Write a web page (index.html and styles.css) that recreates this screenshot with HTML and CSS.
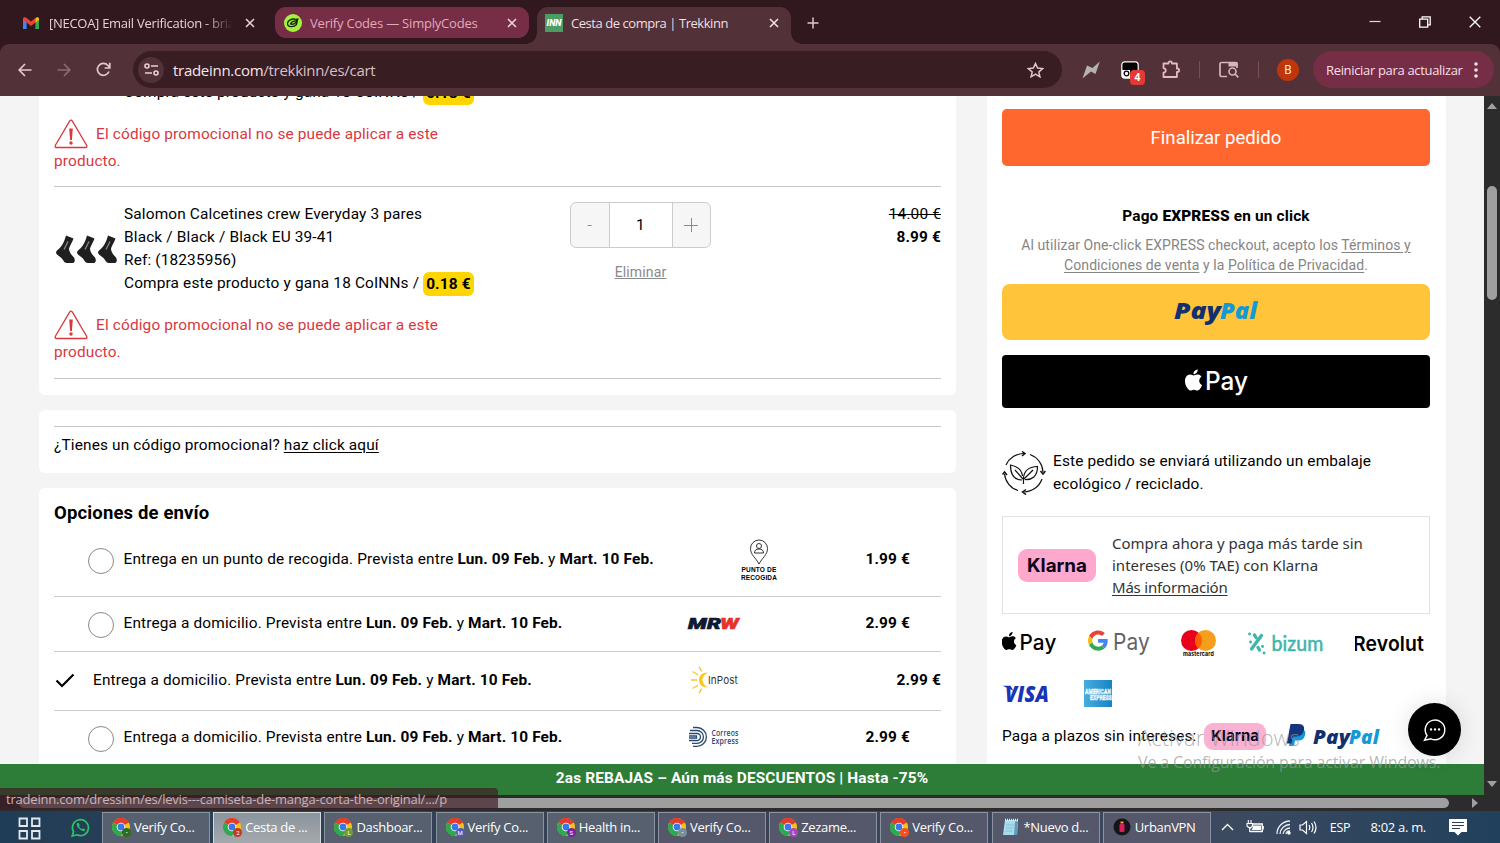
FILE: index.html
```html
<!DOCTYPE html>
<html lang="es">
<head>
    <meta charset="UTF-8">
    <meta name="viewport" content="width=device-width, initial-scale=1.0">
    <title>Cesta de compra | Trekkinn</title>
    <link rel="stylesheet" href="styles.css">
</head>
<body>
    <!-- shared icons -->
    <svg class="defs" width="0" height="0">
        <symbol id="close" viewBox="0 0 10 10"><path d="M1 1l8 8M9 1l-8 8" stroke="currentColor" stroke-width="1.6" fill="none"/></symbol>
        <symbol id="apple" viewBox="0 0 24 24"><path fill="currentColor" d="M12.152 6.896c-.948 0-2.415-1.078-3.96-1.04-2.04.027-3.91 1.183-4.961 3.014-2.117 3.675-.546 9.103 1.519 12.09 1.013 1.454 2.208 3.09 3.792 3.039 1.52-.065 2.09-.987 3.935-.987 1.831 0 2.35.987 3.96.948 1.637-.026 2.676-1.48 3.676-2.948 1.156-1.688 1.636-3.325 1.662-3.415-.039-.013-3.182-1.221-3.22-4.857-.026-3.04 2.48-4.494 2.597-4.559-1.429-2.09-3.623-2.324-4.39-2.376-2-.156-3.675 1.09-4.61 1.09zM15.53 3.83c.843-1.012 1.4-2.427 1.245-3.83-1.207.052-2.662.805-3.532 1.818-.78.896-1.454 2.338-1.273 3.714 1.338.104 2.715-.688 3.559-1.701"/></symbol>
        <symbol id="warning" viewBox="0 0 34 30">
            <path d="M15.6 2.2Q17 .2 18.4 2.2L32.6 26.2Q33.5 28.5 31.5 28.5H2.5Q.5 28.5 1.4 26.2Z" fill="none" stroke="#d9383e" stroke-width="1.3"/>
            <path d="M15.200 9.500h3.600l-.9 11.500h-1.800z" fill="#d9383e"/><circle cx="17" cy="24" r="1.7" fill="#d9383e"/>
        </symbol>
        <symbol id="chrome" viewBox="0 0 18 18">
            <circle cx="9" cy="9" r="9" fill="#fbc116"/>
            <path d="M9 9L1.200 4.500A9 9 0 0 1 16.800 4.500Z" fill="#e33b2e"/>
            <path d="M9 9L1.200 4.500A9 9 0 0 0 9 18L12.900 11.200Z" fill="#2da94f"/>
            <circle cx="9" cy="9" r="4.300" fill="#fff"/><circle cx="9" cy="9" r="3.400" fill="#3b78e7"/>
        </symbol>
        <symbol id="sock" viewBox="0 0 20 29"><path d="M11 .5l7.500 3c-1 3-3.500 7-4.500 10 0 3 2 6 5 9 1.500 2.500.8 5-1 5.500h-6c-2 0-3-1-4-3-1.500-2.500-4-4-6-5.500-1.500-1.500-1.200-3 .5-4.500C7 11.500 9 7.500 11 .5z" fill="#1f1f1f"/><path d="M13 6.500l-4 8" stroke="#8b8b8b" stroke-width="1.200"/></symbol>
    </svg>

    <header class="tabs">
        <div class="tab">
            <svg class="gmail" width="16" height="12" viewBox="0 0 16 12"><path d="M0 1.500V12h3.600V5z" fill="#4285f4"/><path d="M16 1.500V12h-3.600V5z" fill="#34a853"/><path d="M0 1.500C0 .3 1.800-.5 3.600 1L8 4.500 12.400 1v4.500L8 9 3.600 5.500 0 3z" fill="#ea4335"/><path d="M12.400 1C14.200-.5 16 .3 16 1.500V3l-3.600 2.700z" fill="#fbbc04"/></svg>
            <span class="tab-title faded">[NECOA] Email Verification - brian</span>
            <svg class="tab-close" width="10" height="10"><use href="#close"/></svg>
        </div>
        <div class="tab grouped">
            <svg width="18" height="18" viewBox="0 0 18 18"><circle cx="9" cy="9" r="9" fill="#a6f03f"/><path d="M12 5.500C8 4 3.500 6.500 3.500 9.500c0 4 6.500 4 9 1l1-4.500M6.500 10c.5-2 3.500-3.500 6-3-.5 2-3 4-6 3zM12 5.500l2.500-.5" fill="none" stroke="#14260c" stroke-width="1.300"/></svg>
            <span class="tab-title simply">Verify Codes — SimplyCodes</span>
            <svg class="tab-close" width="10" height="10"><use href="#close"/></svg>
        </div>
        <div class="tab active">
            <svg width="18" height="18" viewBox="0 0 18 18"><rect width="18" height="18" fill="#4c9d63"/><text x="1.500" y="12" font-family="Roboto" font-weight="900" font-style="italic" font-size="8.500" fill="#fff" textLength="15" lengthAdjust="spacingAndGlyphs">INN</text></svg>
            <span class="tab-title">Cesta de compra | Trekkinn</span>
            <svg class="tab-close" width="10" height="10"><use href="#close"/></svg>
        </div>
        <svg class="new-tab" width="12" height="12" viewBox="0 0 12 12"><path d="M6 .5v11M.5 6h11" stroke="#e6c3cc" stroke-width="1.500"/></svg>
        <div class="window-buttons">
            <svg width="12" height="12" viewBox="0 0 12 12"><path d="M.5 5.500h11" stroke="#e8d5da" stroke-width="1.200"/></svg>
            <svg width="12" height="12" viewBox="0 0 12 12"><path d="M.7 3.200h8v8h-8zM3.200 3V.8h8v8H9" fill="none" stroke="#fff" stroke-width="1.300"/></svg>
            <svg width="12" height="12" viewBox="0 0 12 12"><path d="M.7.7l10.600 10.600M11.300.7L.7 11.300" stroke="#fff" stroke-width="1.300"/></svg>
        </div>
    </header>

    <nav class="toolbar">
        <svg width="14" height="14" viewBox="0 0 14 14"><path d="M13.500 7H1.500M7 1L1.200 7 7 13" fill="none" stroke="#e3c7ce" stroke-width="1.700"/></svg>
        <svg class="nav-gap" width="14" height="14" viewBox="0 0 14 14"><path d="M.5 7h12M7 1l5.800 6L7 13" fill="none" stroke="#8d6b74" stroke-width="1.700"/></svg>
        <svg class="nav-gap" width="15" height="15" viewBox="0 0 15 15"><path d="M13 9.500A6 6 0 1 1 12 3.500L13.200 5M13.800.8V6H8.600" fill="none" stroke="#e3c7ce" stroke-width="1.700"/></svg>
        <div class="omnibox">
            <span class="site-info"><svg width="15" height="13" viewBox="0 0 15 13"><path d="M7 3h7M1 10h7" stroke="#e9cfd6" stroke-width="1.700"/><circle cx="3" cy="3" r="2" fill="none" stroke="#e9cfd6" stroke-width="1.600"/><circle cx="12" cy="10" r="2" fill="none" stroke="#e9cfd6" stroke-width="1.600"/></svg></span>
            <span class="url">tradeinn.com<i>/trekkinn/es/cart</i></span>
            <svg width="17" height="16" viewBox="0 0 17 16"><path d="M8.500 1.500l2.100 4.600 5 .5-3.800 3.300 1.100 4.900-4.400-2.600-4.400 2.600 1.100-4.900L1.400 6.600l5-.5z" fill="none" stroke="#e3c7ce" stroke-width="1.500"/></svg>
        </div>
        <div class="extensions">
            <svg width="18" height="18" viewBox="0 0 18 18"><path d="M.5 17.500L5 4.500l5.500 2.500L17.800.5 13.500 13 9 10.500z" fill="#b7b2b2"/></svg>
            <div class="ext-box">
                <svg width="18" height="18" viewBox="0 0 18 18"><rect x=".8" y=".8" width="16.400" height="16.400" rx="3" fill="#000" stroke="#fff" stroke-width="1.200"/><path d="M1 9h8v8H3q-2 0-2-2z" fill="#fff"/><circle cx="5.500" cy="12.500" r="2.300" fill="none" stroke="#000" stroke-width="1.300"/></svg>
                <b>4</b>
            </div>
            <svg class="puzzle" width="18" height="19" viewBox="0 0 18 19"><path d="M1.500 3.500h5V3a1.700 1.700 0 0 1 3.400 0v.5h5v5h.5a1.700 1.700 0 0 1 0 3.400h-.5V17H1.500v-4.300c3-.5 3-4 0-4.500z" fill="none" stroke="#e3b9c6" stroke-width="1.800" stroke-linejoin="round"/></svg>
            <span class="divider first"></span>
            <svg class="lens" width="20" height="17" viewBox="0 0 20 17"><path d="M8 15.500H2.500q-1.500 0-1.500-1.500V3q0-1.500 1.500-1.500h14q1.500 0 1.500 1.500v4" fill="none" stroke="#d9b5c0" stroke-width="1.700"/><path d="M9.500 1h9v4.500h-9z" fill="#d9b5c0"/><circle cx="13.500" cy="10.500" r="3.500" fill="none" stroke="#d9b5c0" stroke-width="1.600"/><path d="M16 13l3.300 3.300" stroke="#d9b5c0" stroke-width="1.700"/></svg>
            <span class="divider"></span>
            <span class="avatar">B</span>
        </div>
        <div class="restart">Reiniciar para actualizar<svg width="4" height="16" viewBox="0 0 4 16"><circle cx="2" cy="2" r="1.800"/><circle cx="2" cy="8" r="1.800"/><circle cx="2" cy="14" r="1.800"/></svg></div>
    </nav>

    <div class="view">
        <main class="page">
            <section class="left">
                <div class="card cart">
                    <p class="coins first-coins">Compra este producto y gana 18 CoINNs / <b>0.18 €</b></p>
                    <div class="alert">
                        <div><svg width="34" height="30"><use href="#warning"/></svg>El código promocional no se puede aplicar a este</div>
                        <p>producto.</p>
                    </div>
                    <hr>
                    <div class="item">
                        <div class="thumb"><svg width="20" height="29"><use href="#sock"/></svg><svg width="20" height="29"><use href="#sock"/></svg><svg width="20" height="29"><use href="#sock"/></svg></div>
                        <div class="info">
                            <p class="name">Salomon Calcetines crew Everyday 3 pares</p>
                            <p>Black / Black / Black EU 39-41</p>
                            <p>Ref: (18235956)</p>
                            <p class="coins">Compra este producto y gana 18 CoINNs / <b>0.18 €</b></p>
                        </div>
                        <div class="qty-col">
                            <div class="qty"><span>-</span><strong>1</strong><span><svg width="14" height="14" viewBox="0 0 14 14"><path d="M7.500 0v14M0 7.500h14" stroke="#8a8a8a"/></svg></span></div>
                            <a class="remove">Eliminar</a>
                        </div>
                        <div class="price"><s>14.00 €</s><b>8.99 €</b></div>
                    </div>
                    <div class="alert second">
                        <div><svg width="34" height="30"><use href="#warning"/></svg>El código promocional no se puede aplicar a este</div>
                        <p>producto.</p>
                    </div>
                    <hr>
                </div>

                <div class="card promo">
                    <hr>
                    <p>¿Tienes un código promocional? <u>haz click aquí</u></p>
                </div>

                <div class="card shipping">
                    <h2>Opciones de envío</h2>
                    <div class="option pickup">
                        <span class="radio"></span>
                        <p>Entrega en un punto de recogida. Prevista entre <b>Lun. 09 Feb.</b> y <b>Mart. 10 Feb.</b></p>
                        <div class="carrier"><svg width="38" height="42" viewBox="0 0 38 42"><path d="M19 25C16 19 10.500 16 10.500 9.500a8.500 8.500 0 0 1 17 0C27.500 16 22 19 19 25z" fill="none" stroke="#333" stroke-width="1"/><circle cx="19" cy="7" r="2.500" fill="none" stroke="#333"/><path d="M14.500 14q0-4 4.500-4t4.500 4z" fill="none" stroke="#333"/><text x="1.500" y="33" font-family="Liberation Sans" font-weight="700" font-size="6.500" textLength="35" lengthAdjust="spacingAndGlyphs">PUNTO DE</text><text x="1" y="40.500" font-family="Liberation Sans" font-weight="700" font-size="6.500" textLength="36" lengthAdjust="spacingAndGlyphs">RECOGIDA</text></svg></div>
                        <strong>1.99 €</strong>
                    </div>
                    <div class="option mrw">
                        <span class="radio"></span>
                        <p>Entrega a domicilio. Prevista entre <b>Lun. 09 Feb.</b> y <b>Mart. 10 Feb.</b></p>
                        <div class="carrier"><svg width="55" height="14" viewBox="0 0 55 14"><text x="1" y="12.500" font-family="Roboto" font-weight="900" font-style="italic" font-size="15.500" fill="#0c1a33" stroke="#0c1a33" stroke-width=".7" textLength="33" lengthAdjust="spacingAndGlyphs">MR</text><text x="33" y="12.500" font-family="Roboto" font-weight="900" font-style="italic" font-size="15.500" fill="#e8302d" stroke="#e8302d" stroke-width=".5" textLength="19" lengthAdjust="spacingAndGlyphs">W</text></svg></div>
                        <strong>2.99 €</strong>
                    </div>
                    <div class="option selected">
                        <svg class="check" width="20" height="15" viewBox="0 0 20 15"><path d="M1.500 7.500l5.500 5.500L18.500 1.500" fill="none" stroke="#000" stroke-width="2.200"/></svg>
                        <p>Entrega a domicilio. Prevista entre <b>Lun. 09 Feb.</b> y <b>Mart. 10 Feb.</b></p>
                        <div class="carrier"><svg width="52" height="28" viewBox="0 0 52 28"><path d="M21 6.500q-9 0-9 7.500t9 7.500q-5.500-2.500-5.500-7.500T21 6.500z" fill="#fbc71b"/><path d="M12 .8l2.800 4.500M5.500 5.500l5.500 3.200M4 14h6M5.500 22.500l5.500-3.200M12 27.200l2.800-4.500" stroke="#fbc71b" stroke-width="1.300"/><text x="21" y="18" font-family="Inter, sans-serif" font-size="11" fill="#333" textLength="30" lengthAdjust="spacingAndGlyphs">InPost</text></svg></div>
                        <strong>2.99 €</strong>
                    </div>
                    <div class="option correos">
                        <span class="radio"></span>
                        <p>Entrega a domicilio. Prevista entre <b>Lun. 09 Feb.</b> y <b>Mart. 10 Feb.</b></p>
                        <div class="carrier"><svg width="54" height="22" viewBox="0 0 54 22"><g fill="none" stroke="#2b4a73" stroke-width="1.300"><path d="M6 1.500h4a9.300 9.300 0 0 1 0 18.800H6M3 4.500h7a6.400 6.400 0 0 1 0 12.900H5M2 7.500h8a3.500 3.500 0 0 1 0 7H2M2 10h7.500v2H2"/></g><text x="24.500" y="9.500" font-family="Open Sans" font-size="8" font-weight="600" fill="#2b4a73" textLength="27" lengthAdjust="spacingAndGlyphs">Correos</text><text x="24.500" y="17.500" font-family="Open Sans" font-size="8" font-weight="600" fill="#2b4a73" textLength="27" lengthAdjust="spacingAndGlyphs">Express</text></svg></div>
                        <strong>2.99 €</strong>
                    </div>
                </div>
            </section>

            <aside class="summary">
                <button class="checkout">Finalizar pedido</button>
                <h3>Pago <b>EXPRESS</b> en un click</h3>
                <p class="terms">Al utilizar One-click EXPRESS checkout, acepto los <u>Términos y</u><br><u>Condiciones de venta</u> y la <u>Política de Privacidad</u>.</p>
                <button class="paypal"><svg width="86" height="28" viewBox="0 0 86 28"><text x="1" y="20.500" class="pp" font-size="23.500" fill="#12306f" textLength="47" lengthAdjust="spacingAndGlyphs">Pay</text><text x="47" y="20.500" class="pp" font-size="23.500" fill="#139ad6" textLength="37" lengthAdjust="spacingAndGlyphs">Pal</text></svg></button>
                <button class="apple"><svg width="64" height="30" viewBox="0 0 64 30"><use href="#apple" x="-1" y="2" width="21" height="22" color="#fff"/><text x="21" y="22.500" font-family="Inter, sans-serif" font-size="25" font-weight="500" fill="#fff" textLength="43" lengthAdjust="spacingAndGlyphs">Pay</text></svg></button>

                <div class="eco">
                    <svg width="44" height="44" viewBox="0 0 44 44" fill="none" stroke="#111" stroke-width="1.200"><path d="M4 14A19.500 19.500 0 0 1 22 2.500M28 3.500A19.500 19.500 0 0 1 41 21M40 28A19.500 19.500 0 0 1 22 41M16 39.500A19.500 19.500 0 0 1 2.500 23"/><path d="M20 .5l3 2-3 2.500M38.500 20l2.500 3 2.500-3M24 38.500L20.500 41l3.500 2.500M.5 23.500L2.500 21l2.500 3" stroke-width="1.500"/><path d="M20 29C12 29 8.500 24 8.500 14c7 1.500 11.500 5 12 11M23 28.500c7 .5 12.500-3 12.500-13-9 .5-13.500 4-14 11.500v6M13 19l8 9M31 19l-9 9"/></svg>
                    <p>Este pedido se enviará utilizando un embalaje<br>ecológico / reciclado.</p>
                </div>

                <div class="klarna-box">
                    <span class="klarna"><svg width="62" height="22" viewBox="0 0 62 22"><text x="1" y="17.500" class="kl" font-size="18.500" textLength="60" lengthAdjust="spacingAndGlyphs">Klarna</text></svg></span>
                    <p>Compra ahora y paga más tarde sin<br>intereses (0% TAE) con Klarna<br><u>Más información</u></p>
                </div>

                <div class="logos">
                    <svg width="55" height="28" viewBox="0 0 55 28"><use href="#apple" x="-2" y="3" width="18" height="18"/><text x="17.500" y="21" font-family="Inter, sans-serif" font-size="21" font-weight="500" textLength="37" lengthAdjust="spacingAndGlyphs">Pay</text></svg>
                    <svg width="62" height="28" viewBox="0 0 62 28"><g transform="translate(0 1.500) scale(.42)"><path fill="#ea4335" d="M24 9.500c3.540 0 6.710 1.220 9.210 3.600l6.850-6.850C35.900 2.380 30.470 0 24 0 14.620 0 6.510 5.380 2.560 13.220l7.980 6.190C12.430 13.720 17.740 9.500 24 9.500z"/><path fill="#4285f4" d="M46.980 24.550c0-1.570-.15-3.090-.38-4.550H24v9.020h12.940c-.58 2.960-2.260 5.480-4.780 7.180l7.730 6c4.510-4.180 7.090-10.360 7.090-17.650z"/><path fill="#fbbc05" d="M10.530 28.590c-.48-1.450-.76-2.990-.76-4.590s.27-3.140.76-4.590l-7.980-6.190C.92 16.460 0 20.120 0 24c0 3.880.92 7.540 2.560 10.780l7.970-6.190z"/><path fill="#34a853" d="M24 48c6.480 0 11.930-2.130 15.890-5.810l-7.730-6c-2.150 1.450-4.920 2.300-8.160 2.300-6.260 0-11.570-4.220-13.470-9.910l-7.980 6.190C6.510 42.620 14.620 48 24 48z"/></g><text x="25" y="21" font-family="Inter, sans-serif" font-size="23" fill="#5f6368" textLength="37" lengthAdjust="spacingAndGlyphs">Pay</text></svg>
                    <svg width="35" height="28" viewBox="0 0 35 28"><circle cx="10.500" cy="11.500" r="10.500" fill="#eb001b"/><circle cx="24.500" cy="11.500" r="10.500" fill="#f79e1b"/><path d="M17.500 3.700a10.500 10.500 0 0 1 0 15.600 10.500 10.500 0 0 1 0-15.600z" fill="#ff5f00"/><text x="2" y="26.500" font-family="Inter, sans-serif" font-weight="700" font-size="5.500" textLength="31" lengthAdjust="spacingAndGlyphs">mastercard</text></svg>
                    <svg width="77" height="28" viewBox="0 0 77 28"><g stroke="#3db5ab" stroke-width="3.300" stroke-linecap="round"><path d="M14.500 6.500L4.500 20M7.500 6l1.500 2.500M11 18.500l1.500 2.500"/><path d="M2.500 5h.1M17 24h.1M15.500 17.500h.1M3.500 13h.1" stroke-width="2.800"/></g><text x="24.500" y="22" font-family="Lato" font-size="21" fill="#3db5ab" stroke="#3db5ab" stroke-width=".5" textLength="52" lengthAdjust="spacingAndGlyphs">bizum</text></svg>
                    <svg width="71" height="28" viewBox="0 0 71 28"><text x="-2" y="21.500" font-family="Inter, sans-serif" font-weight="600" font-size="20.500" textLength="71" lengthAdjust="spacingAndGlyphs">Revolut</text></svg>
                </div>
                <div class="logos cards">
                    <svg width="48" height="28" viewBox="0 0 48 28"><text x="3" y="21.500" font-family="Open Sans" font-weight="800" font-style="italic" font-size="22" fill="#1a34b8" textLength="44" lengthAdjust="spacingAndGlyphs">VISA</text><path d="M.5 5.800h8l3 5z" fill="#1a34b8"/></svg>
                    <svg width="28" height="28" viewBox="0 0 28 28"><defs><linearGradient id="amex"><stop offset="0" stop-color="#48ade0"/><stop offset="1" stop-color="#1684c4"/></linearGradient></defs><rect width="28" height="27" fill="url(#amex)"/><g font-family="Roboto" font-weight="700" font-size="6.500" fill="#2b95d0" stroke="#fff" stroke-width=".6"><text x="1" y="14" textLength="26" lengthAdjust="spacingAndGlyphs">AMERICAN</text><text x="6" y="20" textLength="22" lengthAdjust="spacingAndGlyphs">EXPRESS</text></g></svg>
                </div>
                <div class="installments">
                    <span>Paga a plazos sin intereses:</span>
                    <span class="klarna small"><svg width="49" height="18" viewBox="0 0 49 18"><text x="0" y="14" class="kl" font-size="15" textLength="48" lengthAdjust="spacingAndGlyphs">Klarna</text></svg></span>
                    <svg width="94" height="28" viewBox="0 0 94 28"><path d="M7 7h9q4.500 1 3 6.500T11.500 18.500H9L8 24H3z" fill="#1597d5"/><path d="M4.500 2H13q6 .5 5 6-1.500 6.500-8 6.500H7L5.500 21.500H.8z" fill="#12357e"/><text x="27" y="21.500" class="pp" font-size="20" fill="#12306f" textLength="37" lengthAdjust="spacingAndGlyphs">Pay</text><text x="63" y="21.500" class="pp" font-size="20" fill="#139ad6" textLength="30" lengthAdjust="spacingAndGlyphs">Pal</text></svg>
                </div>
            </aside>

            <div class="banner">2as REBAJAS – Aún más DESCUENTOS | Hasta -75%</div>
            <div class="chat"><svg width="24" height="24" viewBox="0 0 24 24"><path d="M4 17.500A9.800 9.800 0 1 1 8 20.800L1.500 22.200z" fill="none" stroke="#fff" stroke-width="1.400"/><path d="M8 11.500h.1M12 11.500h.1M16 11.500h.1" stroke="#fff" stroke-width="2.300" stroke-linecap="round"/></svg></div>
        </main>
        <div class="scroll-y"><i class="up"></i><i class="thumb-y"></i><i class="down"></i></div>
    </div>
    <div class="scroll-x"><i class="thumb-x"></i><i class="next"></i></div>
    <div class="status">tradeinn.com/dressinn/es/levis---camiseta-de-manga-corta-the-original/.../p</div>
    <div class="watermark"><p>Activar Windows</p><span>Ve a Configuración para activar Windows.</span></div>

    <footer class="taskbar">
        <svg class="views" width="23" height="23" viewBox="0 0 23 23" fill="none" stroke="#e4e8ec" stroke-width="1.800"><path d="M1.500 1.500h7.500v7.500H1.500zM14 1.500h7.500v7.500H14zM1.500 14h7.500v7.500H1.500zM14 14h7.500v7.500H14z"/></svg>
        <svg class="whatsapp" width="19" height="19" viewBox="0 0 19 19"><path d="M2.500 13.500A8 8 0 1 1 6 16.800L1.200 18z" fill="none" stroke="#2bc567" stroke-width="1.700"/><path d="M6.500 5q-2 1.500 1 5t5.500 3.200q1.500-1 1-1.800L12 10.200l-1 1q-2-.7-3-2.900l.7-1L7.700 5z" fill="#2bc567"/></svg>
        <div class="apps">
            <div class="app"><span class="ico"><svg width="18" height="18"><use href="#chrome"/></svg><i class="dot green">•</i></span>Verify Co...</div>
            <div class="app current"><span class="ico"><svg width="18" height="18"><use href="#chrome"/></svg><i class="dot red">2</i></span>Cesta de ...</div>
            <div class="app"><span class="ico"><svg width="18" height="18"><use href="#chrome"/></svg><i class="dot lime">L</i></span>Dashboar...</div>
            <div class="app"><span class="ico"><svg width="18" height="18"><use href="#chrome"/></svg><i class="dot blue">M</i></span>Verify Co...</div>
            <div class="app"><span class="ico"><svg width="18" height="18"><use href="#chrome"/></svg><i class="dot purple">S</i></span>Health in...</div>
            <div class="app"><span class="ico"><svg width="18" height="18"><use href="#chrome"/></svg><i class="dot gray">•</i></span>Verify Co...</div>
            <div class="app"><span class="ico"><svg width="18" height="18"><use href="#chrome"/></svg><i class="dot violet">L</i></span>Zezame...</div>
            <div class="app"><span class="ico"><svg width="18" height="18"><use href="#chrome"/></svg><i class="dot orange">•</i></span>Verify Co...</div>
            <div class="app"><span class="ico"><svg width="18" height="18" viewBox="0 0 18 18"><path d="M3 2h13l-1 15H1z" fill="#a9dceb"/><path d="M13 3h3l-1 14h-3z" fill="#5e9db5"/><path d="M3 2h13" stroke="#e8eef0" stroke-width="2.500" stroke-dasharray="1 1"/><path d="M4 7h8M4 10h7M3.500 13h7" stroke="#83c3d8"/></svg></span>*Nuevo d...</div>
            <div class="app"><span class="ico"><svg width="18" height="18" viewBox="0 0 18 18"><circle cx="9" cy="9" r="8.500" fill="#16141a"/><rect x="6.500" y="6" width="5" height="8" rx="1" fill="#d81e5b"/><path d="M7.500 4.500h3" stroke="#f5a623" stroke-width="2"/></svg></span>UrbanVPN</div>
        </div>
        <div class="tray">
            <svg width="13" height="8" viewBox="0 0 13 8"><path d="M1 7l5.500-5.500L12 7" fill="none" stroke="#fff" stroke-width="1.300"/></svg>
            <svg width="18" height="14" viewBox="0 0 18 14"><path d="M6.500 4h9.800v7.500H4.500V8M17.200 6v3.500" fill="none" stroke="#fff" stroke-width="1.300"/><path d="M7 5.500h8v4.500H6z" fill="#fff"/><path d="M1 3.500h5.500V6L5 7.500H2.500L1 6zM2.300 0v3M5 0v3M3.700 7v4.500H6" fill="#4b5a6e" stroke="#fff" stroke-width="1.100"/></svg>
            <svg width="15" height="15" viewBox="0 0 15 15"><path d="M1 14A13 13 0 0 1 14 1M4 14A10 10 0 0 1 14 4.500M7 14a7 7 0 0 1 7-6M10 14a4 4 0 0 1 4-3" fill="none" stroke="#e9edf2" stroke-width="1.300"/><circle cx="13" cy="13" r="1.700" fill="#fff"/></svg>
            <svg width="19" height="15" viewBox="0 0 19 15" fill="none" stroke="#fff" stroke-width="1.200"><path d="M1 5h2.500L7.500 1.500v12L3.500 10H1zM10 5q1.500 2.500 0 5M12.500 3q3 4.500 0 9M15 1.500q4 6 0 12"/></svg>
            <span class="lang">ESP</span>
            <span class="clock">8:02 a. m.</span>
            <svg width="18" height="18" viewBox="0 0 18 18"><path d="M0 1h18v13h-5.500L9 17.500 5.500 14H0z" fill="#fff"/><path d="M3 4.500h12M3 7.500h12M3 10.500h8" stroke="#2a3f57" stroke-width="1.200"/></svg>
        </div>
    </footer>
</body>
</html>
```

FILE: styles.css
```css
* {
    box-sizing: border-box;
}
body {
    margin: 0;
    width: 1500px;
    height: 843px;
    overflow: hidden;
    display: flex;
    flex-direction: column;
    position: relative;
    background: #31181e;
    font-family: "Open Sans", "Noto Sans", sans-serif;
}
p, h2, h3, hr {
    margin: 0;
}
svg {
    display: block;
    flex: none;
}
.defs {
    position: absolute;
}

/* tab strip */
.tabs {
    height: 44px;
    flex: none;
    display: flex;
    gap: 8px;
    padding: 7px 19px 0 13px;
    color: #e8cfd6;
    font-size: 13px;
}
.tab {
    width: 254px;
    height: 31px;
    padding: 0 12px 0 9px;
    display: flex;
    align-items: center;
    gap: 8px;
}
.gmail {
    margin: 0 1px;
}
.tab-title {
    flex: 1;
    white-space: nowrap;
    overflow: hidden;
    letter-spacing: -0.45px;
}
.tab-title.faded {
    flex: none;
    width: 184px;
    margin-left: 1px;
    letter-spacing: -0.28px;
    -webkit-mask-image: linear-gradient(to right, #000 155px, transparent 184px);
    mask-image: linear-gradient(to right, #000 155px, transparent 184px);
}
.tab-close {
    margin-left: auto;
}
.grouped {
    background: #752e46;
    border-radius: 11px;
}
.tab-title.simply {
    color: #e3a9bb;
    letter-spacing: -0.2px;
}
.active {
    height: 37px;
    padding-bottom: 6px;
    padding-left: 8px;
    background: #523139;
    border-radius: 11px 11px 0 0;
    position: relative;
    color: #f0dfe3;
}
.active::before, .active::after {
    content: "";
    position: absolute;
    bottom: 0;
    width: 11px;
    height: 11px;
}
.active::before {
    left: -11px;
    background: radial-gradient(circle at 0 0, transparent 10.5px, #523139 11px);
}
.active::after {
    right: -11px;
    background: radial-gradient(circle at 100% 0, transparent 10.5px, #523139 11px);
}
.new-tab {
    margin: 10px 0 0 8px;
}
.window-buttons {
    margin: 9px 0 0 auto;
    display: flex;
    gap: 38px;
}

/* toolbar */
.toolbar {
    height: 52px;
    flex: none;
    display: flex;
    align-items: center;
    padding: 0 6px 1px 18px;
    background: #523139;
    border-radius: 9px 9px 0 0;
}
.nav-gap {
    margin-left: 25px;
}
.omnibox {
    width: 929px;
    height: 37px;
    margin-left: 22px;
    padding: 0 18px 0 5px;
    display: flex;
    align-items: center;
    background: #381d23;
    border-radius: 19px;
}
.site-info {
    width: 26px;
    height: 26px;
    border-radius: 50%;
    background: #523139;
    display: grid;
    place-items: center;
}
.url {
    flex: 1;
    margin-left: 9px;
    font-size: 15px;
    letter-spacing: -0.28px;
    color: #f6e6ea;
}
.url i {
    font-style: normal;
    color: #d9c0c6;
}
.extensions {
    width: 251px;
    display: flex;
    align-items: center;
    padding-left: 20px;
}
.ext-box {
    position: relative;
    margin: 0 23px 0 21px;
}
.ext-box b {
    position: absolute;
    left: 9px;
    top: 9px;
    width: 15px;
    height: 15px;
    border-radius: 4px;
    background: #e53935;
    color: #fff;
    font: bold 11px/15px Roboto, sans-serif;
    text-align: center;
}
.puzzle {
    margin-right: 19px;
}
.lens {
    margin: 0 19px;
}
.divider {
    width: 1px;
    height: 17px;
    background: #7b4d5a;
}
.avatar {
    width: 22px;
    height: 22px;
    margin-left: 18px;
    border-radius: 50%;
    background: #bf360c;
    color: #f6e3dc;
    font: 12px/22px Roboto, sans-serif;
    text-align: center;
}
.restart {
    flex: 1;
    height: 37px;
    padding: 0 16px 0 13px;
    border-radius: 19px;
    background: #752e46;
    color: #fbdfe7;
    font-size: 13px;
    letter-spacing: -0.33px;
    white-space: nowrap;
    display: flex;
    align-items: center;
    justify-content: space-between;
    fill: #fbdfe7;
}

/* page */
.view {
    height: 699px;
    flex: none;
    display: flex;
}
.page {
    width: 1484px;
    height: 699px;
    overflow: hidden;
    position: relative;
    display: flex;
    gap: 31px;
    padding-left: 39px;
    background: #f4f4f4;
    color: #000;
    font-family: Roboto, "Liberation Sans", sans-serif;
    font-size: 15.4px;
    letter-spacing: 0.15px;
    line-height: 23px;
}
.left {
    width: 917px;
    display: flex;
    flex-direction: column;
    gap: 15px;
}
.card {
    background: #fff;
    border-radius: 6px;
    padding: 0 15px;
    flex: none;
}
hr {
    border: none;
    height: 1px;
    background: #c5c9c8;
}
.cart {
    height: 314px;
    margin-top: -15px;
}
.first-coins {
    padding-left: 70px;
}
.coins b {
    display: inline-block;
    height: 24px;
    line-height: 24px;
    padding: 0 3px;
    border-radius: 6px;
    background: #ffd500;
    vertical-align: top;
}
.alert {
    margin: 14px 0 13px;
    color: #d9383e;
}
.alert div {
    height: 31px;
    padding-bottom: 1px;
    display: flex;
    align-items: center;
    gap: 8px;
}
.second {
    margin: 16px 0 14px;
}
.item {
    display: flex;
    padding-top: 15px;
}
.thumb {
    width: 70px;
    padding: 33px 0 0 1px;
    display: flex;
    gap: 1px;
    height: 92px;
}
.info {
    width: 446px;
    height: 92px;
    padding-top: 1px;
}
.qty-col {
    width: 141px;
    text-align: center;
}
.qty {
    height: 46px;
    border: 1px solid #ccc;
    border-radius: 6px;
    overflow: hidden;
    display: flex;
    background: #f6f6f6;
}
.qty span {
    flex: 1;
    display: grid;
    place-items: center;
    color: #888;
    font-weight: 300;
    font-size: 17px;
}
.qty strong {
    width: 64px;
    line-height: 44px;
    border: solid #ccc;
    border-width: 0 1px;
    background: #fff;
    font-weight: 400;
}
.remove {
    display: block;
    margin-top: 13px;
    font-size: 14px;
    color: #8a8a8a;
    text-decoration: underline;
}
.price {
    margin-left: auto;
    padding-top: 1px;
    display: flex;
    flex-direction: column;
    text-align: right;
}
.promo {
    height: 63px;
    padding-top: 16px;
}
.promo hr {
    margin-bottom: 7px;
}
u {
    text-underline-offset: 2px;
}
.shipping {
    height: 290px;
}
.shipping h2 {
    height: 35px;
    padding-top: 14px;
    font-size: 18.5px;
}
.option {
    display: flex;
    align-items: center;
    border-bottom: 1px solid #ccc;
    padding: 0 31px 2px 34px;
    height: 55px;
}
.option.pickup {
    height: 74px;
    padding-bottom: 0;
}
.radio {
    width: 26px;
    height: 26px;
    border: 1px solid #8a8a8a;
    border-radius: 50%;
    margin: 3px 9.5px 0 0;
}
.pickup .radio {
    margin-top: 2px;
}
.option p {
    flex: 1;
}
.carrier {
    width: 144px;
}
.pickup .carrier {
    display: grid;
    justify-content: center;
}
.option strong {
    width: 79px;
    text-align: right;
}
.option.selected {
    height: 59px;
    padding: 0 0 2px;
}
.check {
    margin: 0 18px 0 1px;
}
.selected strong {
    width: 110px;
}

/* right column */
.summary {
    width: 459px;
    padding: 13px 16px 0 15px;
    background: #fff;
}
.summary button {
    width: 428px;
    border: none;
    display: grid;
    place-items: center;
    font-family: inherit;
}
.summary .checkout {
    height: 57px;
    border-radius: 5px;
    background: #ff672e;
    color: #fff;
    font-size: 18.6px;
    letter-spacing: 0;
}
.summary h3 {
    margin-top: 39px;
    text-align: center;
    font-size: 15.4px;
}
.terms {
    margin: 7px 0 9px;
    text-align: center;
    color: #858585;
    font-size: 14px;
    letter-spacing: 0.09px;
    line-height: 20px;
}
.summary .paypal {
    height: 56px;
    border-radius: 8px;
    background: #ffc439;
}
.summary .apple {
    height: 53px;
    margin-top: 15px;
    border-radius: 4px;
    background: #000;
}
.pp {
    font-family: "Open Sans", sans-serif;
    font-weight: 800;
    font-style: italic;
}
.eco {
    height: 46px;
    margin-top: 42px;
    display: flex;
    align-items: center;
    gap: 7px;
}
.klarna-box {
    height: 98px;
    margin-top: 20px;
    padding-left: 15px;
    border: 1px solid #e2e2e2;
    display: flex;
    align-items: center;
    gap: 16px;
    font: 15px/22px "Noto Sans", sans-serif;
    letter-spacing: 0;
    color: #333;
}
.klarna-box u {
    letter-spacing: -0.2px;
}
.klarna {
    width: 78px;
    height: 33px;
    border-radius: 9px;
    background: #ffa8cd;
    display: grid;
    place-items: center;
}
.kl {
    font-family: Inter, sans-serif;
    font-weight: 700;
    fill: #0b051d;
    letter-spacing: 0;
}
.logos {
    display: flex;
    gap: 31px;
    margin-top: 15px;
}
.cards {
    margin-top: 23px;
    gap: 34px;
}
.installments {
    margin-top: 14px;
    height: 28px;
    display: flex;
    align-items: center;
}
.small {
    width: 62px;
    height: 27px;
    margin: 0 20px 0 auto;
    background: #fbb1d1;
}
.installments > svg {
    margin-right: 50px;
}
.banner {
    position: absolute;
    left: 0;
    right: 0;
    bottom: 0;
    height: 31px;
    line-height: 29px;
    background: #2d7d39;
    color: #fff;
    font-weight: 700;
    text-align: center;
}
.chat {
    position: absolute;
    left: 1408px;
    top: 607px;
    width: 53px;
    height: 53px;
    border-radius: 50%;
    background: #000;
    box-shadow: 0 0 22px rgba(0, 0, 0, .12);
    display: grid;
    place-items: center;
}

/* scrollbars */
.scroll-y {
    width: 16px;
    background: #2c2c2c;
    display: flex;
    flex-direction: column;
    align-items: center;
}
.up, .down {
    border: 5px solid transparent;
}
.up {
    border-top: none;
    border-bottom: 6px solid #a0a0a0;
    margin-top: 7px;
}
.down {
    border-bottom: none;
    border-top: 6px solid #a0a0a0;
    margin: auto 0 8px;
}
.thumb-y {
    width: 10px;
    height: 114px;
    margin-top: 77px;
    border-radius: 5px;
    background: #9f9f9f;
}
.scroll-x {
    height: 16px;
    flex: none;
    background: #2c2c2c;
    display: flex;
    align-items: center;
    padding-left: 19px;
}
.thumb-x {
    width: 1430px;
    height: 10px;
    border-radius: 5px;
    background: #9f9f9f;
}
.next {
    margin-left: 23px;
    border: 5px solid transparent;
    border-right: none;
    border-left: 6px solid #a0a0a0;
}
.status {
    position: absolute;
    left: 0;
    top: 788px;
    width: 498px;
    height: 21px;
    padding-left: 6px;
    border-top-right-radius: 4px;
    background: rgba(62, 28, 36, .68);
    color: #cbb3b9;
    font-size: 13px;
    line-height: 23px;
    letter-spacing: -0.2px;
    font-variant-ligatures: none;
    white-space: nowrap;
}
.watermark {
    position: absolute;
    left: 1138px;
    top: 725px;
    color: rgba(150, 150, 150, .7);
    font-family: "Open Sans", sans-serif;
    font-weight: 300;
    font-size: 22px;
    line-height: 25px;
    white-space: nowrap;
}
.watermark span {
    display: block;
    font-size: 16px;
    font-weight: 400;
    letter-spacing: -0.15px;
    line-height: 24px;
}

/* taskbar */
.taskbar {
    height: 32px;
    flex: none;
    display: flex;
    align-items: center;
    padding-left: 18px;
    background: linear-gradient(to right, #1f3d57, #2a3f55 10%, #3b4255 50%, #3c4a60 82%, #21405c);
    color: #fff;
    font-size: 13px;
}
.views {
    margin-top: 2px;
}
.whatsapp {
    margin: 1px 12px 0 30px;
}
.apps {
    display: flex;
    gap: 3.2px;
    height: 31px;
    align-self: flex-end;
}
.app {
    width: 108px;
    height: 32px;
    padding: 0 0 2px 9px;
    border: 1px solid #8a93a0;
    background: #56606e;
    display: flex;
    align-items: center;
    gap: 4px;
    letter-spacing: -0.3px;
    white-space: nowrap;
}
.app:nth-child(n+6) {
    background: #55586a;
}
.app.current {
    background: linear-gradient(#8a949c, #a4a9ad);
    border-color: #d5d9dc;
}
.ico {
    position: relative;
}
.dot {
    position: absolute;
    right: -1px;
    bottom: -1px;
    width: 9px;
    height: 9px;
    border-radius: 50%;
    color: #fff;
    font: 6px/9px Roboto, sans-serif;
    text-align: center;
}
.green { background: #2e6b1e; }
.red { background: #c5391c; }
.lime { background: #6a9f38; }
.blue { background: #4a5fc1; }
.purple { background: #7b1fa2; }
.gray { background: #78909c; }
.violet { background: #ab47bc; }
.orange { background: #f4511e; }
.tray {
    flex: 1;
    display: flex;
    align-items: center;
    padding: 0 33px 0 10px;
    gap: 12px;
}
.tray svg:nth-child(4) {
    margin-left: -4px;
}
.lang {
    font-size: 12.5px;
    letter-spacing: -0.2px;
}
.clock {
    margin: 0 auto 0 8px;
    letter-spacing: -0.3px;
    white-space: nowrap;
}
```
